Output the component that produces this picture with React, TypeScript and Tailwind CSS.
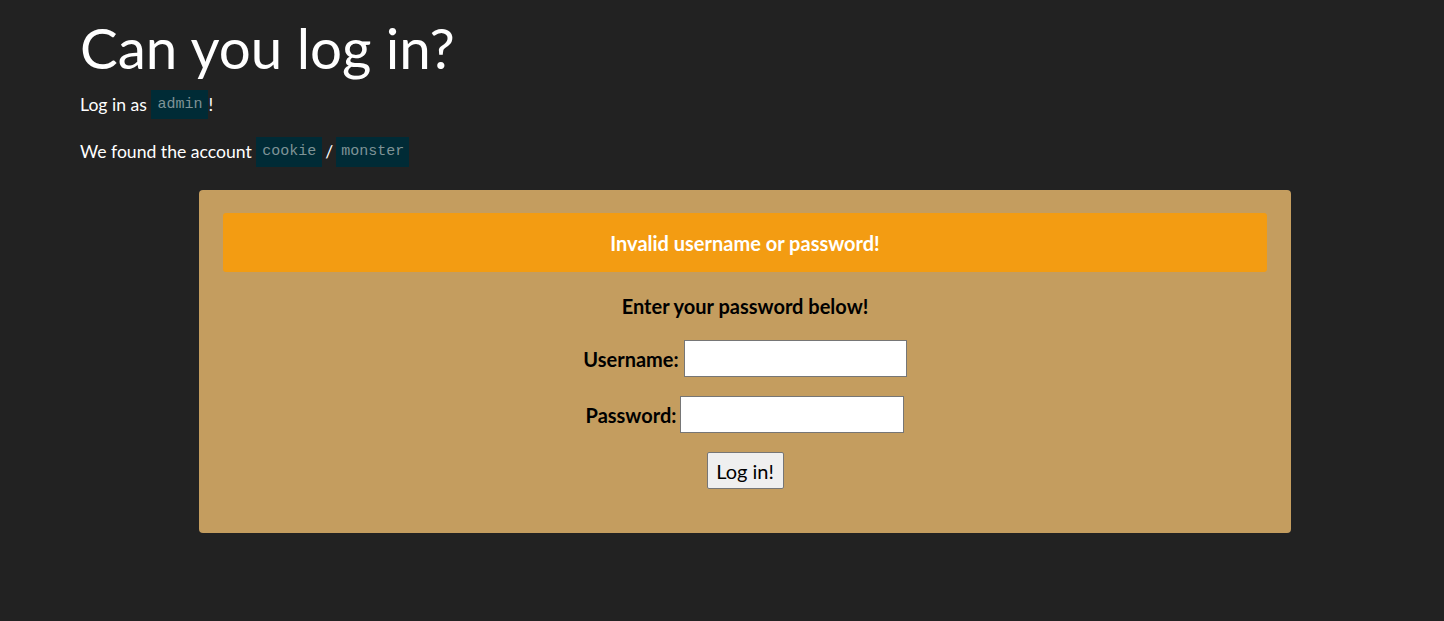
export default function App() {
  return (
    <div className="min-h-[621px] bg-[#222222] px-[80px] pt-[14px] font-['Lato','Open_Sans',sans-serif] text-white">
      <h1 className="text-[56.5px] leading-[66px] font-normal">Can you log in?</h1>
      <p className="mt-[10px] flex items-center text-[17.6px] leading-[29px]">
        Log in as&nbsp;
        <code className="bg-[#002b36] px-[6px] font-['Liberation_Mono',monospace] text-[15px] leading-[29px] text-[#7f9396]">admin</code>
        !
      </p>
      <p className="mt-[18px] flex items-center text-[17.6px] leading-[30px]">
        We found the account&nbsp;
        <code className="bg-[#002b36] px-[6px] font-['Liberation_Mono',monospace] text-[15px] leading-[30px] text-[#7f9396]">cookie</code>
        <span className="px-[3px]">/</span>
        <code className="bg-[#002b36] px-[5px] font-['Liberation_Mono',monospace] text-[15px] leading-[30px] text-[#7f9396]">monster</code>
      </p>
      <div className="mt-[23px] ml-[119px] w-[1092px] rounded-[4px] bg-[#c49d5f] px-[24px] pt-[23px] pb-[44px] text-black">
        <div className="flex h-[59px] items-center justify-center rounded-[3px] bg-[#f39c12] text-[20px] font-bold text-white">
          Invalid username or password!
        </div>
        <form className="flex flex-col items-center" onSubmit={(e) => e.preventDefault()}>
          <p className="mt-[21px] text-[20px] font-bold leading-[26px]">Enter your password below!</p>
          <div className="mt-[21px] flex items-center gap-[5px]">
            <label className="text-[20px] font-bold">Username:</label>
            <input type="text" className="h-[37px] w-[223px] border border-[#767676] bg-white" />
          </div>
          <div className="mt-[19px] flex items-center gap-[4px]">
            <label className="text-[20px] font-bold">Password:</label>
            <input type="password" className="h-[37px] w-[224px] border border-[#767676] bg-white" />
          </div>
          <button className="mt-[19px] h-[37px] w-[77px] rounded-[2px] border border-[#767676] bg-[#efefef] text-[20px]">
            Log in!
          </button>
        </form>
      </div>
    </div>
  )
}
